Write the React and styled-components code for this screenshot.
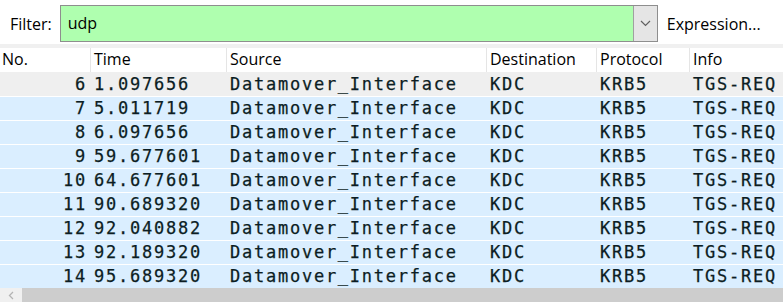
import styled, { createGlobalStyle } from "styled-components";

const GlobalStyle = createGlobalStyle`
  html, body {
    margin: 0;
    padding: 0;
    background: #ffffff;
    overflow: hidden;
  }
  * {
    box-sizing: border-box;
  }
`;

const packets = [
  { no: 6, time: "1.097656", selected: true },
  { no: 7, time: "5.011719" },
  { no: 8, time: "6.097656" },
  { no: 9, time: "59.677601" },
  { no: 10, time: "64.677601" },
  { no: 11, time: "90.689320" },
  { no: 12, time: "92.040882" },
  { no: 13, time: "92.189320" },
  { no: 14, time: "95.689320" },
];

const columns = "90px 136px 260px 110px 93px 1fr";

const Window = styled.div`
  width: 783px;
  height: 302px;
  display: flex;
  flex-direction: column;
  background: #ffffff;
  overflow: hidden;
  font-family: "Open Sans", "Noto Sans", sans-serif;
`;

const Toolbar = styled.div`
  height: 48px;
  display: flex;
  align-items: center;
  padding: 3px 0 0 10px;
  background: #ffffff;
  border-bottom: 4px solid #f0f0f0;
  flex-shrink: 0;
`;

const Label = styled.span`
  font-size: 16px;
  color: #000000;
  margin-right: 8px;
`;

const FilterBox = styled.div`
  width: 598px;
  height: 37px;
  display: flex;
  border: 1px solid #8e8e8e;
  background: #afffaf;
`;

const FilterText = styled.span`
  flex: 1;
  display: flex;
  align-items: center;
  padding-left: 7px;
  padding-bottom: 2px;
  font-size: 16px;
  color: #000000;
`;

const DropButton = styled.div`
  width: 24px;
  display: flex;
  align-items: center;
  justify-content: center;
  background: #e5e5e5;
  border-left: 1px solid #a0a0a0;
`;

const Expression = styled.span`
  margin-left: 9px;
  font-size: 16px;
  color: #000000;
`;

const Row = styled.div`
  display: grid;
  grid-template-columns: ${columns};
  height: 24px;
  flex-shrink: 0;
`;

const HeaderRow = styled(Row)`
  background: #ffffff;
`;

const HeaderCell = styled.div`
  display: flex;
  align-items: center;
  padding: 0 0 2px ${(p) => (p.$first ? 2 : 3)}px;
  font-size: 16px;
  color: #000000;
  border-left: ${(p) => (p.$first ? "none" : "1px solid #e5e5e5")};
  white-space: nowrap;
  overflow: hidden;
`;

const PacketRow = styled(Row)`
  background: ${(p) => (p.$selected ? "#efefef" : "#daeeff")};
  border-top: 1px solid ${(p) => (p.$selected ? "#efefef" : "#ffffff")};
`;

const Cell = styled.div`
  display: flex;
  align-items: center;
  justify-content: ${(p) => (p.$right ? "flex-end" : "flex-start")};
  padding: 0 ${(p) => (p.$right ? 3 : 0)}px 1px ${(p) => (p.$right ? 0 : 4)}px;
  font-family: "DejaVu Sans Mono", "Liberation Mono", monospace;
  font-size: 17px;
  letter-spacing: 1.75px;
  color: #0c1d23;
  -webkit-text-stroke: 0.25px #0c1d23;
  white-space: nowrap;
  overflow: hidden;
`;

const Scrollbar = styled.div`
  height: 14px;
  display: flex;
  flex-shrink: 0;
  margin-top: auto;
  background: #cdcdcd;
`;

const ScrollArrow = styled.div`
  width: 22px;
  display: flex;
  align-items: center;
  justify-content: center;
  background: #f0f0f0;
`;

export default function App() {
  return (
    <Window>
      <GlobalStyle />
      <Toolbar>
        <Label>Filter:</Label>
        <FilterBox>
          <FilterText>udp</FilterText>
          <DropButton>
            <svg width="11" height="7" viewBox="0 0 11 7">
              <path d="M1 1 L5.5 5.5 L10 1" fill="none" stroke="#606060" strokeWidth="1.2" />
            </svg>
          </DropButton>
        </FilterBox>
        <Expression>Expression...</Expression>
      </Toolbar>
      <HeaderRow>
        <HeaderCell $first>No.</HeaderCell>
        <HeaderCell>Time</HeaderCell>
        <HeaderCell>Source</HeaderCell>
        <HeaderCell>Destination</HeaderCell>
        <HeaderCell>Protocol</HeaderCell>
        <HeaderCell>Info</HeaderCell>
      </HeaderRow>
      {packets.map((p) => (
        <PacketRow key={p.no} $selected={p.selected}>
          <Cell $right>{p.no}</Cell>
          <Cell>{p.time}</Cell>
          <Cell>Datamover_Interface</Cell>
          <Cell>KDC</Cell>
          <Cell>KRB5</Cell>
          <Cell>TGS-REQ</Cell>
        </PacketRow>
      ))}
      <Scrollbar>
        <ScrollArrow>
          <svg width="6" height="9" viewBox="0 0 6 9">
            <path d="M5 1 L1.5 4.5 L5 8" fill="none" stroke="#b4b4b4" strokeWidth="1.3" />
          </svg>
        </ScrollArrow>
      </Scrollbar>
    </Window>
  );
}
